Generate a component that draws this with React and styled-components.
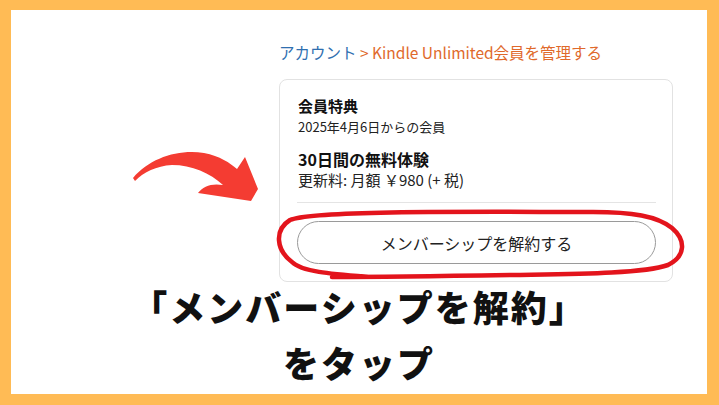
import React from "react";
import styled, { createGlobalStyle } from "styled-components";

const GlobalStyle = createGlobalStyle`
  html, body {
    margin: 0;
    padding: 0;
  }
  body {
    font-family: "Noto Sans CJK JP", "Noto Sans", sans-serif;
    background: #ffbb55;
  }
`;

const Frame = styled.div`
  width: 719px;
  height: 405px;
  box-sizing: border-box;
  padding: 10px 12px 11px 11px;
  background: #ffbb55;
`;

const Panel = styled.div`
  height: 100%;
  background: #fff;
  display: flex;
  flex-direction: column;
  overflow: hidden;
`;

const Top = styled.div`
  display: flex;
  padding-top: 32px;
`;

const ArrowSlot = styled.div`
  width: 268px;
  flex: 0 0 268px;
  display: flex;
  justify-content: flex-end;
  padding: 86px 9px 0 0;
  box-sizing: border-box;
`;

const Main = styled.div`
  width: 394px;
  display: flex;
  flex-direction: column;
`;

const Crumbs = styled.div`
  font-size: 15.5px;
  line-height: 20px;
  white-space: nowrap;
`;

const CrumbLink = styled.span`
  color: ${p => (p.$current ? "#e0692b" : "#2f6fb0")};
`;

const Card = styled.div`
  margin-top: 17px;
  border: 1px solid #e2e2e2;
  border-radius: 8px;
  padding: 15px 16px 17px 17px;
  display: flex;
  flex-direction: column;
`;

const Heading = styled.div`
  font-size: ${p => (p.$big ? "16px" : "15px")};
  font-weight: 700;
  line-height: 22px;
  color: #111;
  padding-left: 1px;
  margin-top: ${p => (p.$big ? "11px" : "0")};
`;

const Detail = styled.div`
  font-size: ${p => (p.$small ? "13px" : "15px")};
  line-height: 20px;
  color: #222;
  padding-left: 1px;
`;

const Divider = styled.hr`
  border: none;
  border-top: 1px solid #e4e4e4;
  margin: 12px 0 0;
`;

const ButtonWrap = styled.div`
  position: relative;
  margin-top: 18px;
`;

const CancelButton = styled.button`
  width: 100%;
  height: 43px;
  border: 1px solid #9a9a9a;
  border-radius: 22px;
  background: #fff;
  font-family: "Noto Sans CJK JP", "Noto Sans", sans-serif;
  font-size: 16px;
  color: #222;
  cursor: pointer;
`;

const Loop = styled.svg`
  position: absolute;
  left: -25px;
  top: -15px;
  pointer-events: none;
`;

const Caption = styled.div`
  margin-top: -4px;
  text-align: center;
  font-size: 36px;
  font-weight: 900;
  line-height: 56px;
  letter-spacing: 2px;
  color: #111;
`;

const CurvedArrow = () => (
  <svg width="150" height="90" viewBox="0 0 150 90">
    <path
      d="M13,50 C30,30 58,21 84,25 C100,28 110,35 117,41 L125,29 L138,61 L131,73 L78,65 C83,58 92,55 103,57 C90,45 72,37 52,37 C36,38 24,44 15,53 Z"
      fill="#f43c32"
    />
  </svg>
);

const App = () => (
  <>
    <GlobalStyle />
    <Frame>
      <Panel>
        <Top>
          <ArrowSlot>
            <CurvedArrow />
          </ArrowSlot>
          <Main>
            <Crumbs>
              <CrumbLink>アカウント</CrumbLink>
              <CrumbLink $current> &gt; Kindle Unlimited会員を管理する</CrumbLink>
            </Crumbs>
            <Card>
              <Heading>会員特典</Heading>
              <Detail $small>2025年4月6日からの会員</Detail>
              <Heading $big>30日間の無料体験</Heading>
              <Detail>更新料: 月額 ￥980 (+ 税)</Detail>
              <Divider />
              <ButtonWrap>
                <CancelButton>メンバーシップを解約する</CancelButton>
                <Loop width="418" height="80" viewBox="0 0 418 80">
                  <path
                    d="M98,71 C60,68 30,66 20,56 C4,44 2,24 18,14 C40,4 200,6 321,6 C360,6 385,10 400,22 C414,34 414,50 396,59 C370,68 300,68 240,69 C180,70 120,71 60,71"
                    fill="none"
                    stroke="#e3141c"
                    strokeWidth="4.5"
                    strokeLinecap="round"
                  />
                </Loop>
              </ButtonWrap>
            </Card>
          </Main>
        </Top>
        <Caption>
          「メンバーシップを解約」
          <br />
          をタップ
        </Caption>
      </Panel>
    </Frame>
  </>
);

export default App;
